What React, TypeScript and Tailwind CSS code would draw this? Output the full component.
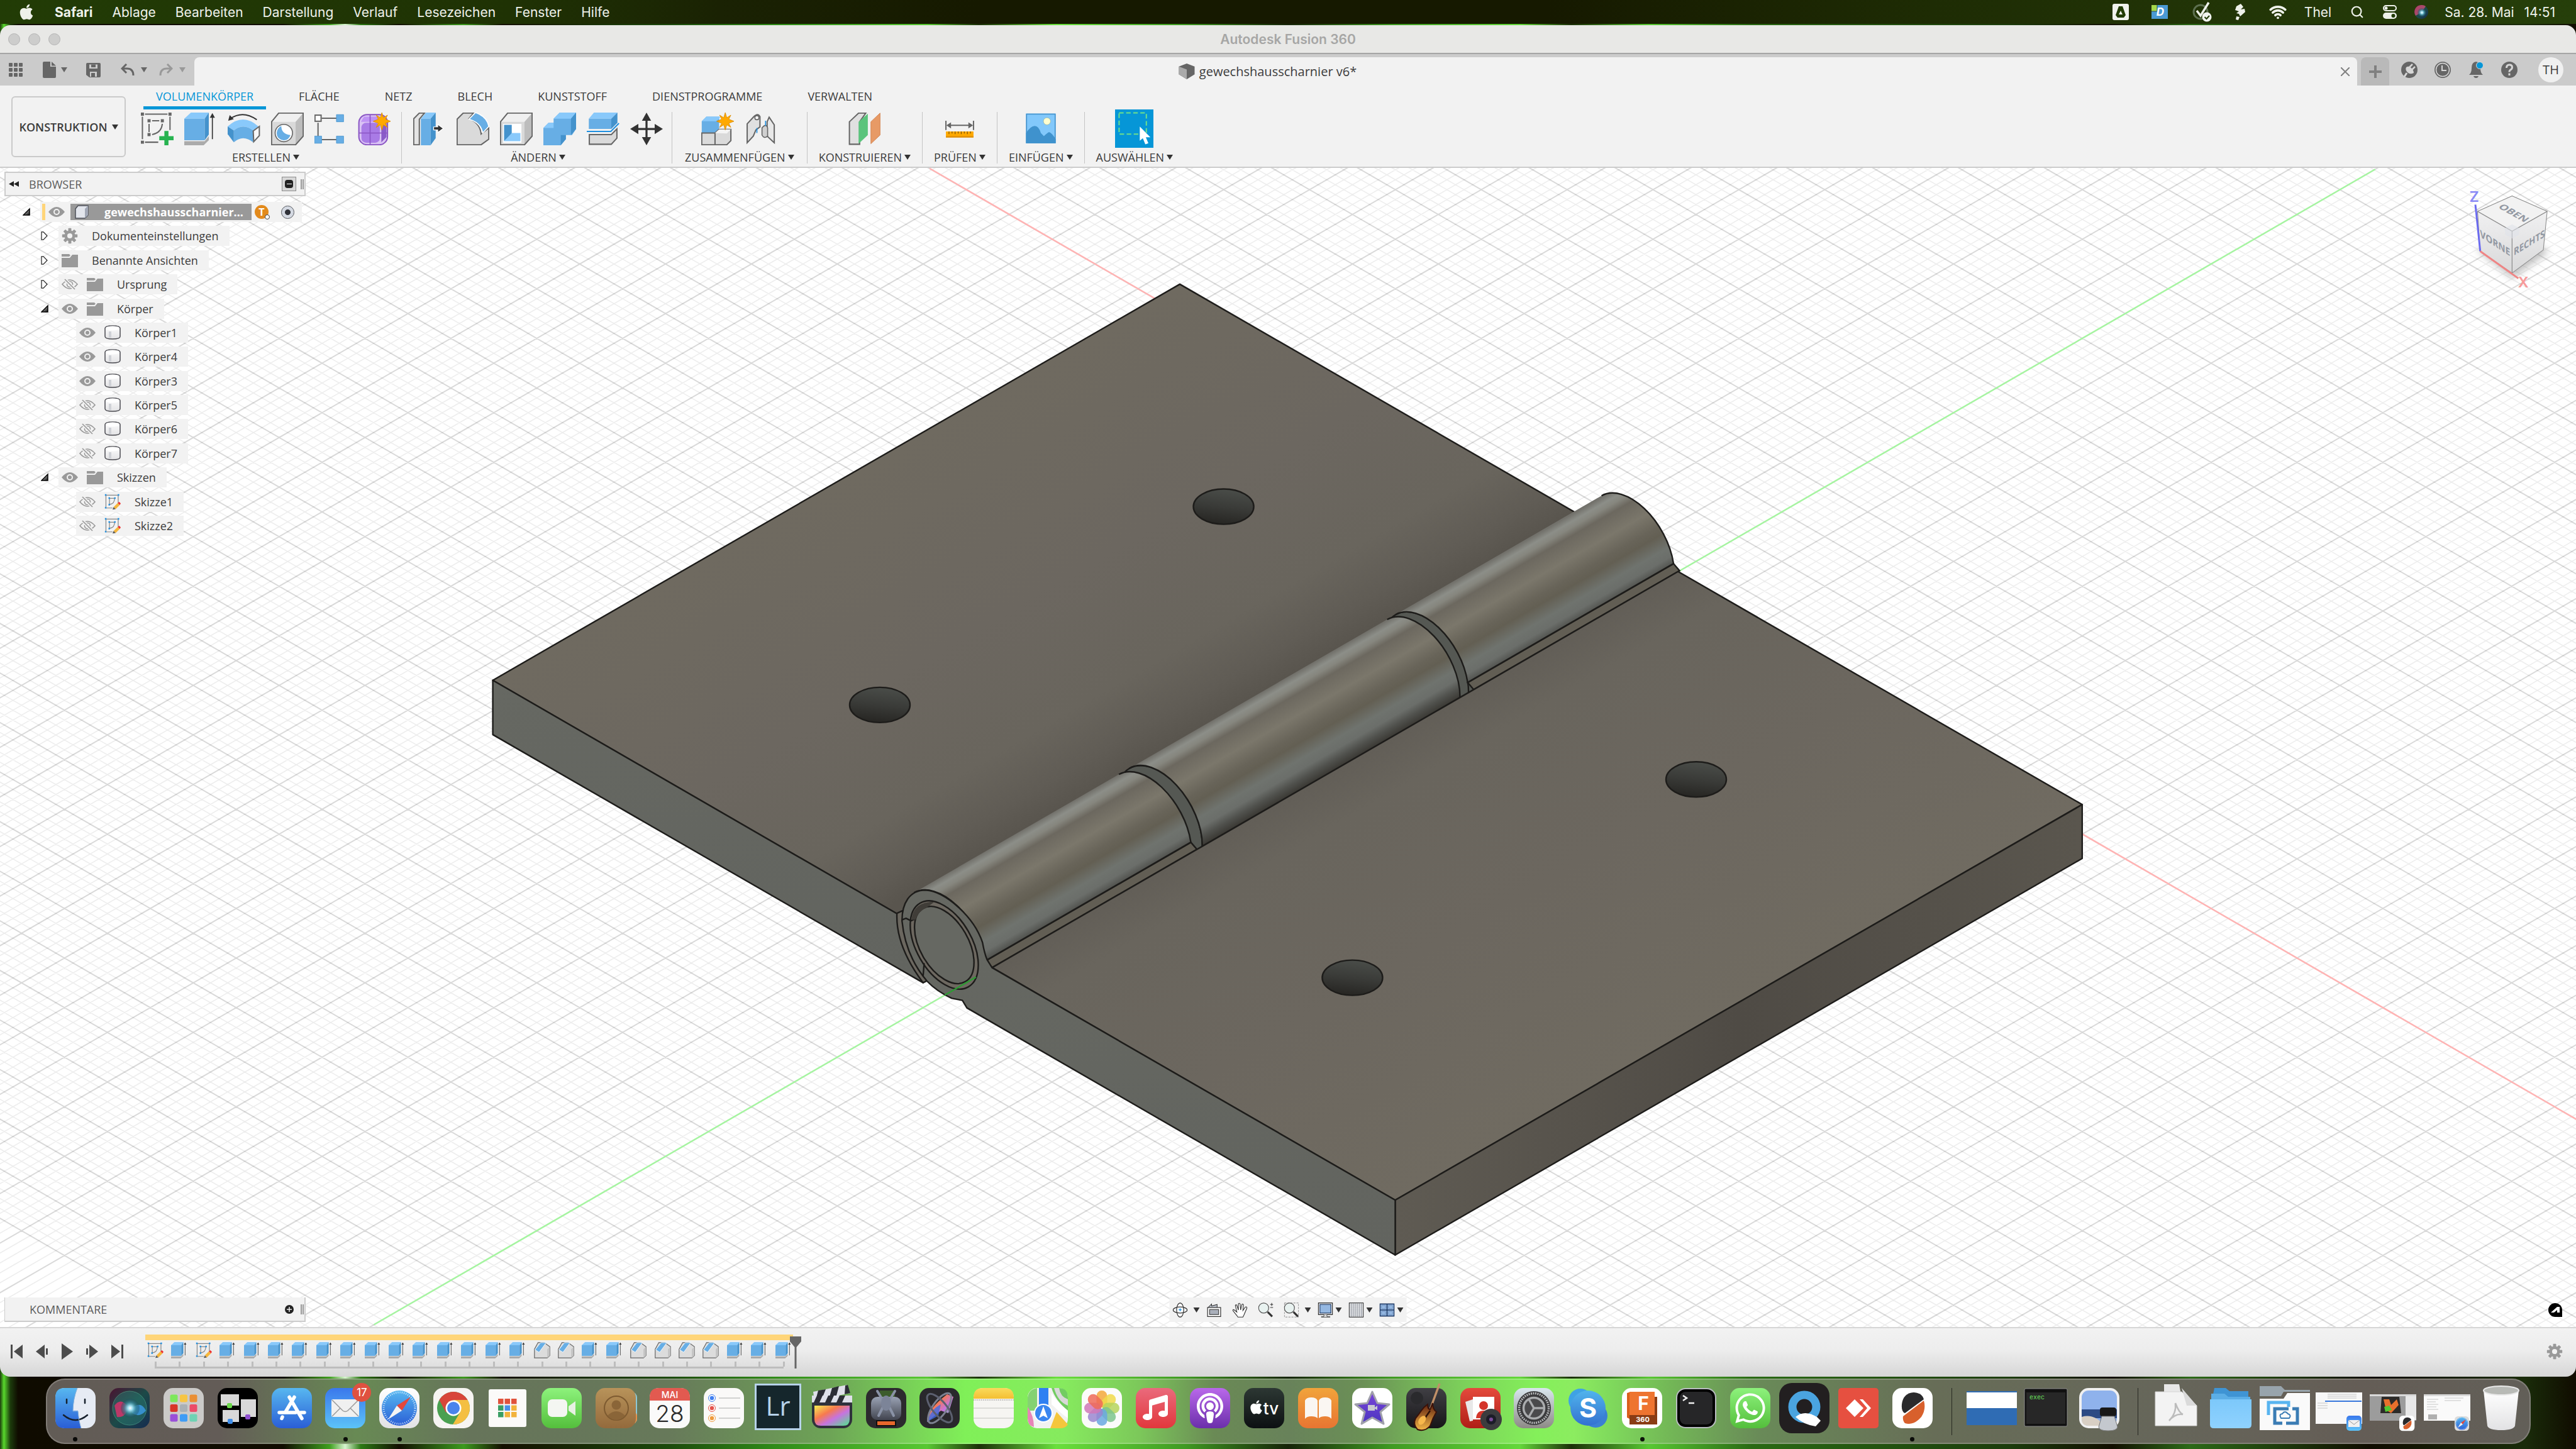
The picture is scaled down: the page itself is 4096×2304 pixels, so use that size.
import React from "react";
import { FaApple, FaWhatsapp, FaPodcast, FaMusic } from "react-icons/fa";
import { Wifi, Search } from "lucide-react";

type Kids = { children?: React.ReactNode };

/* ---------- shared gradients ---------- */

const verticalGradients: [string, string, string][] = [
  ["gBlue", "#57b7f0", "#2a5ed6"],
  ["gMail", "#3a78ec", "#5cc3f8"],
  ["gGreen", "#8df27c", "#54bf3c"],
  ["gRed", "#ea6a7c", "#e2373c"],
  ["gPurple", "#b968ea", "#6b2fab"],
  ["gBlack", "#2c3733", "#0c1012"],
  ["gOrange", "#f1a33b", "#e87532"],
  ["gGrey", "#d9e6ee", "#8d8a86"],
  ["gWhite", "#ffffff", "#e2e2e4"],
  ["gDark", "#403f44", "#161518"],
  ["gBooth", "#e44a3c", "#b01e16"],
  ["gSkype", "#50b4ec", "#3371d0"],
  ["gBrown", "#b8935a", "#946a3c"],
  ["gFolder", "#7cc8fa", "#8fd2ff"],
  ["gYellow", "#fada5c", "#f4bf33"],
  ["gMetal", "#9aa2b4", "#41444f"],
  ["gStar", "#7a45d8", "#4b35c0"],
  ["gGuitar", "#5c1c0c", "#f4b848"],
];

function SharedDefs() {
  return (
    <svg className="absolute h-0 w-0" aria-hidden="true">
      <defs>
        {verticalGradients.map(([id, a, b]) => (
          <linearGradient key={id} id={id} x1="0" y1="0" x2="0" y2="1">
            <stop offset="0" stopColor={a} />
            <stop offset="1" stopColor={b} />
          </linearGradient>
        ))}
        <linearGradient id="gRainbow" x1="0" y1="0" x2="1" y2="1">
          <stop offset="0" stopColor="#f6ef52" />
          <stop offset="0.35" stopColor="#f77a4e" />
          <stop offset="0.6" stopColor="#c673e0" />
          <stop offset="1" stopColor="#4ee88a" />
        </linearGradient>
        <radialGradient id="gSiri">
          <stop offset="0" stopColor="#ffffff" />
          <stop offset="0.25" stopColor="#9fe0f0" />
          <stop offset="0.6" stopColor="#3c8a9c" stopOpacity="0.8" />
          <stop offset="1" stopColor="#1c4a5c" stopOpacity="0.3" />
        </radialGradient>
        <linearGradient id="gSiriBg" x1="0" y1="0" x2="1" y2="1">
          <stop offset="0" stopColor="#4a1230" />
          <stop offset="0.5" stopColor="#1c4a48" />
          <stop offset="1" stopColor="#162c50" />
        </linearGradient>
        <linearGradient id="gFade" x1="0" y1="0" x2="1" y2="1">
          <stop offset="0" stopColor="#eeeeee" />
          <stop offset="1" stopColor="#111111" />
        </linearGradient>
      </defs>
    </svg>
  );
}

function Caret({ className = "text-[#333333]" }: { className?: string }) {
  return (
    <svg viewBox="0 0 10 8" className={`h-2 w-2.5 shrink-0 ${className}`} aria-hidden="true">
      <path d="M0 0H10L5 8Z" fill="currentColor" />
    </svg>
  );
}

/* ---------- macOS menu bar ---------- */

const menus = ["Ablage", "Bearbeiten", "Darstellung", "Verlauf", "Lesezeichen", "Fenster", "Hilfe"];

function MenuBar() {
  return (
    <header className="flex h-[38px] items-center justify-between bg-[linear-gradient(90deg,#223c06_0%,#1f3204_20%,#1a2203_28%,#161900_38%,#161900_60%,#1e2c04_75%,#263f0a_100%)] pr-[33px] pl-7 font-[Inter,sans-serif] text-[21px] leading-none text-[#eef1ea]">
      <nav className="flex items-center gap-[31px]">
        <button aria-label="Apple">
          <FaApple size={28} />
        </button>
        <button className="font-bold">Safari</button>
        {menus.map((m) => (
          <button key={m}>{m}</button>
        ))}
      </nav>
      <div className="flex items-center">
        <svg viewBox="0 0 26 26" className="mr-9 h-[26px] w-[26px]">
          <rect width="26" height="26" rx="3" fill="#f0f2ee" />
          <path d="M10 4h6l5 14-3 4H8l-3-4ZM13 11l-3 6h6Z" fill="#223c06" fillRule="evenodd" />
        </svg>
        <svg viewBox="0 0 26 22" className="mr-[38px] h-[22px] w-[26px]">
          <rect width="26" height="22" fill="#4a9ad4" />
          <rect width="9" height="10" fill="#a5d84a" />
          <path d="M9 0v10H0" fill="none" stroke="#274a5a" />
          <text x="14" y="17" fontSize="17" fontWeight="700" fontStyle="italic" textAnchor="middle" fill="#fff">D</text>
        </svg>
        <svg viewBox="0 0 32 32" className="mr-9 h-8 w-8">
          <circle cx="14" cy="16" r="11" fill="none" stroke="#5d7050" strokeWidth="3" />
          <path d="M8 14l6 8L27 1" fill="none" stroke="#eef1ea" strokeWidth="3.500" />
          <circle cx="24" cy="24" r="7.500" fill="#f2f4f0" />
          <path d="M20.500 24l3 3 4.500-5" fill="none" stroke="#223c06" strokeWidth="2" />
        </svg>
        <svg viewBox="0 0 17 26" className="mr-[38px] h-[26px] w-[17px]" fill="#eef1ea">
          <path d="M10 0l4 5-4 4 6-1 1 5-8 7-2-4-4-1 4-3-6-2 2-6Z" />
          <path d="M3 20l5 1-2 5-4-1Z" />
        </svg>
        <Wifi size={28} strokeWidth={3.2} className="mr-7" />
        <span className="mr-[30px]">Thel</span>
        <Search size={22} strokeWidth={2.4} className="mr-[30px]" />
        <svg viewBox="0 0 22 22" className="mr-7 h-[22px] w-[22px]">
          <rect x="1" y="1" width="20" height="8" rx="4" fill="none" stroke="#eef1ea" strokeWidth="2" />
          <circle cx="5" cy="5" r="2.500" fill="#eef1ea" />
          <rect x="0" y="12" width="22" height="10" rx="5" fill="#eef1ea" />
          <circle cx="16.500" cy="17" r="3" fill="#223c06" />
        </svg>
        <svg viewBox="0 0 22 22" className="mr-[26px] h-[22px] w-[22px]">
          <circle cx="11" cy="11" r="11" fill="url(#gSiriBg)" />
          <path d="M11 0a11 11 0 0 0-9 17q6-3 9-6 4-4 7-9a11 11 0 0 0-7-2" fill="#e0507c" opacity="0.7" />
          <circle cx="12" cy="12" r="7" fill="url(#gSiri)" />
        </svg>
        <span className="mr-4">Sa. 28. Mai</span>
        <span>14:51</span>
      </div>
    </header>
  );
}

/* ---------- window chrome ---------- */

function TitleBar() {
  return (
    <div className="flex h-[46px] items-center border-b-2 border-[#a5a5a5] bg-[#e8e8e6] px-[13px]">
      <div className="flex flex-1 gap-[13px]">
        {["Schließen", "Minimieren", "Zoomen"].map((l) => (
          <button key={l} aria-label={l} className="h-[19px] w-[19px] rounded-full border border-[#b4b4b4] bg-[#cdcdcc]" />
        ))}
      </div>
      <h1 className="font-[Inter,sans-serif] text-[21px] leading-none font-semibold text-[#a6a6a5]">Autodesk Fusion 360</h1>
      <div className="flex-1" />
    </div>
  );
}

function TabBar() {
  return (
    <div className="flex h-[50px] bg-[#cbcbcb]">
      <div className="flex w-[309px] shrink-0 items-center pl-[14px] text-[#666666]">
        <button aria-label="Daten" className="mr-8">
          <svg viewBox="0 0 22 22" className="h-[22px] w-[22px]" fill="currentColor">
            {[0, 8, 16].map((y) => [0, 8, 16].map((x) => <rect key={`${x}-${y}`} x={x} y={y} width="6" height="6" rx="1" />))}
          </svg>
        </button>
        <button aria-label="Datei" className="mr-[30px] flex items-center gap-2">
          <svg viewBox="0 0 21 26" className="h-[26px] w-[21px]" fill="currentColor">
            <path d="M2 0H12V8H21V24q0 2-2 2H2q-2 0-2-2V2q0-2 2-2ZM14 0L21 6.500H14Z" />
          </svg>
          <Caret className="text-[#666666]" />
        </button>
        <button aria-label="Speichern" className="mr-8">
          <svg viewBox="0 0 23 23" className="h-[23px] w-[23px]">
            <path d="M2 0H21q2 0 2 2V21q0 2-2 2H5L0 19V2q0-2 2-2Z" fill="#666666" />
            <path d="M5 2.500H18V9H5ZM6 14H17V22H6Z" fill="#cbcbcb" />
            <path d="M8 2.500H15V7H8ZM8 16h6v6H8Z" fill="#666666" />
          </svg>
        </button>
        <button aria-label="Rückgängig" className="mr-[19px] flex items-center gap-2.5">
          <svg viewBox="0 0 22 20" className="h-5 w-[22px]" fill="none" stroke="currentColor" strokeWidth="3">
            <path d="M9 1L2 8l7 7M2 8h8q10 0 10 11" />
          </svg>
          <Caret className="text-[#666666]" />
        </button>
        <button aria-label="Wiederholen" className="flex items-center gap-2.5 text-[#999999]">
          <svg viewBox="0 0 22 20" className="h-5 w-[22px]" fill="none" stroke="currentColor" strokeWidth="3">
            <path d="M13 1l7 7-7 7M20 8h-8Q2 8 2 19" />
          </svg>
          <Caret className="text-[#999999]" />
        </button>
      </div>
      <div className="mt-[5px] mr-[6px] flex flex-1 items-center rounded-t-lg bg-[#f2f2f2] pr-[12px]">
        <div className="flex flex-1 items-center justify-center gap-[7px]">
          <svg viewBox="0 0 26 26" className="h-[25px] w-[26px]">
            <path d="M0 5L13 0l13 5v13l-13 8L0 18Z" fill="#666666" />
            <path d="M0 5l13 5v16L0 18Z" fill="#aaaaaa" />
          </svg>
          <span className="text-[20px] leading-none text-[#3c3c3c]">gewechshausscharnier v6*</span>
        </div>
        <button aria-label="Tab schließen">
          <svg viewBox="0 0 14 14" className="h-3.5 w-3.5" stroke="#808080" strokeWidth="2">
            <path d="M0 0L14 14M14 0L0 14" />
          </svg>
        </button>
      </div>
      <button aria-label="Neuer Tab" className="mt-[5px] flex w-[45px] items-center justify-center rounded-t-lg bg-[#b9b9b9]">
        <svg viewBox="0 0 20 20" className="h-5 w-5" stroke="#808080" strokeWidth="4">
          <path d="M10 0V20M0 10H20" />
        </svg>
      </button>
      <div className="flex items-center gap-[27px] pr-5 pl-[19px]">
        <button aria-label="Erweiterungen">
          <svg viewBox="0 0 26 26" className="h-[26px] w-[26px]">
            <circle cx="13" cy="13" r="13" fill="#666666" />
            <path d="M5 24L9 18" stroke="#d6d6d6" strokeWidth="3" />
            <path d="M8 9q4-3 8 1t4 8q-6 3-10-1t-2-8" fill="#d6d6d6" />
            <path d="M13 9l5-5M17 13l5-5" stroke="#d6d6d6" strokeWidth="2.500" />
          </svg>
        </button>
        <button aria-label="Auftragsstatus">
          <svg viewBox="0 0 26 26" className="h-[26px] w-[26px]">
            <circle cx="13" cy="13" r="12" fill="#666666" stroke="#666666" strokeWidth="2" />
            <circle cx="13" cy="13" r="10.500" fill="none" stroke="#d6d6d6" strokeWidth="1.500" />
            <path d="M12 6V14H19" fill="none" stroke="#d6d6d6" strokeWidth="2" />
          </svg>
        </button>
        <button aria-label="Benachrichtigungen">
          <svg viewBox="0 0 26 28" className="h-7 w-[26px]">
            <path d="M13 1q7 1 7 10 0 8 4 11H2q4-3 4-11 0-9 7-10Z" fill="#666666" />
            <path d="M9 24h8q-1 3-4 3t-4-3" fill="#666666" />
            <circle cx="19" cy="7" r="5.500" fill="#0696d7" stroke="#d6d6d6" />
          </svg>
        </button>
        <button aria-label="Hilfe">
          <svg viewBox="0 0 26 26" className="h-[26px] w-[26px]">
            <circle cx="13" cy="13" r="13" fill="#666666" />
            <path d="M8.500 10q0-5 4.500-5t4.500 4q0 2.500-2.500 4-2 1-2 3.500" fill="none" stroke="#d6d6d6" strokeWidth="3" />
            <rect x="11.500" y="18.500" width="3" height="3.500" fill="#d6d6d6" />
          </svg>
        </button>
        <button className="ml-1.5 h-10 w-10 rounded-full bg-[#f0f0f0] text-[20px] leading-none text-[#3c3c3c]">TH</button>
      </div>
    </div>
  );
}

/* ---------- tool icons, drawn in a 64 unit square ---------- */

function Ico({ children }: Kids) {
  return (
    <svg viewBox="0 0 64 64" className="h-[52px] w-[52px] shrink-0" aria-hidden="true">
      {children}
    </svg>
  );
}

const B1 = "#89c9fb";
const B2 = "#67aee5";
const B3 = "#4492cc";
const G = "#666666";

const Extrude = () => (
  <>
    <path d="M0 12L13 0H48L40 12Z" fill={B1} />
    <path d="M0 12H40V54H0Z" fill={B2} />
    <path d="M40 12L48 0V43L40 54Z" fill={B3} />
    <path d="M0 56H40L48 46V54L38 64H0Z" fill="#ababab" />
    <path d="M55 6V52" stroke="#333" strokeWidth="2" />
    <path d="M55 1L50 10H60Z" fill="#333" />
  </>
);

const SketchPlus = () => (
  <>
    <path d="M8 3H52M3 8V52M57 8V34M8 58H34M22 16H36M16 22V38M22 43Q40 40 42 22" fill="none" stroke={G} strokeWidth="2.500" />
    <path d="M0 0h6v6H0ZM54 0h6v6h-6ZM0 55h6v6H0ZM13 13h6v6h-6ZM39 13h6v6h-6ZM13 40h6v6h-6Z" fill={G} />
    <path d="M46 36h8v10h10v8H54v10h-8V54H36v-8h10Z" fill="#27b350" />
  </>
);

const Revolve = () => (
  <>
    <path d="M0 27Q30 0 60 27L50 35Q30 20 12 35Z" fill={B1} />
    <path d="M12 35Q30 20 50 35V58Q30 42 12 58Z" fill={B2} />
    <path d="M0 27L12 35V58L0 42Z" fill={B3} />
    <path d="M50 36L62 27V45L51 57Z" fill="#f8f8f8" stroke={G} strokeWidth="2.500" />
    <path d="M5 12Q30-5 57 14" fill="none" stroke="#333" strokeWidth="2.500" />
    <path d="M1 16L4 5l8 8Z" fill="#333" />
  </>
);

const BoxShape = () => (
  <>
    <path d="M1 18L15 1H63L48 18Z" fill="#f0f0f0" />
    <path d="M48 18L63 1V46L48 63Z" fill="#bdbdbd" />
    <path d="M1 18H48V63H1Z" fill="#d9d9d9" />
    <path d="M1 18L15 1H63V46L48 63H1Z" fill="none" stroke={G} strokeWidth="2.500" />
  </>
);

const Hole = () => (
  <>
    <BoxShape />
    <circle cx="25" cy="40" r="17" fill="#fff" stroke={G} strokeWidth="2" />
    <path d="M20 26Q20 42 38 44Q34 55 24 54Q11 52 11 40Q12 30 20 26Z" fill={B2} />
  </>
);

const PatternIcon = () => (
  <>
    <path d="M14 11H46M7 20V46M14 53H46" stroke={G} strokeWidth="2.500" />
    <rect x="1" y="5" width="12" height="12" fill="#fff" stroke={G} strokeWidth="2.500" />
    <path d="M43 4h14v14H43ZM0 46h14v14H0ZM43 46h14v14H43Z" fill={B2} stroke={B3} />
  </>
);

const Burst = ({ x, y }: { x: number; y: number }) => (
  <path
    transform={`translate(${x} ${y})`}
    d="M0-17L3-7 11-12 7-4 17 0 7 4 11 12 3 7 0 17-3 7-11 12-7 4-17 0-7-4-11-12-3-7Z"
    fill="#ffa900"
    stroke="#d98a00"
  />
);

const Form = () => (
  <>
    <rect x="2" y="4" width="56" height="59" rx="16" fill="#d9c2f4" stroke="#8a55c4" strokeWidth="2.500" />
    <rect x="7" y="20" width="36" height="39" rx="9" fill="#a97be6" />
    <path d="M12 8H38L44 18H6Z" fill="#bf93f5" />
    <path d="M46 24L56 16V48L46 58Z" fill="#8a5cc9" />
    <path d="M24 5V62M2 40H58" stroke="#8a55c4" strokeWidth="2" />
    <Burst x={47} y={17} />
  </>
);

const PushPull = () => (
  <>
    <path d="M1 12L12 1H22L12 13V63H1Z" fill="#e4e4e4" stroke={G} strokeWidth="2.500" />
    <path d="M15 12L25 0H44L34 12Z" fill={B1} />
    <path d="M15 12H34V64H15Z" fill={B2} />
    <path d="M34 12L44 0V50L34 64Z" fill={B3} />
    <path d="M40 28h8v-5l11 8-11 8v-5h-8Z" fill="#333" stroke="#fff" strokeWidth="1.500" />
  </>
);

const Fillet = () => (
  <>
    <path d="M1 13L13 1H33L24 12Q46 20 48 42L63 30V52L48 63H1Z" fill="#dadada" stroke={G} strokeWidth="2.500" />
    <path d="M37 0Q60 8 63 27L51 40Q48 20 24 13Z" fill={B2} stroke="#fff" strokeWidth="2" />
  </>
);

const Shell = () => (
  <>
    <BoxShape />
    <path d="M6 22H42V59H6Z" fill="#fff" />
    <path d="M8 24H23V42L8 56Z" fill={B3} />
    <path d="M23 40H40V56H8Z" fill={B1} />
  </>
);

const Combine = () => (
  <>
    <path d="M20 12L32 0H64V32L56 44H44V52L34 64H0V30L10 20H20Z" fill={B2} />
    <path d="M20 12L32 0H64L54 12ZM0 30L10 20H20V30Z" fill={B1} />
    <path d="M54 12L64 0V32L54 44ZM34 44H44V52L34 64Z" fill={B3} />
  </>
);

const Split = () => (
  <>
    <path d="M4 12L14 0H60L48 12Z" fill={B1} />
    <path d="M4 12H48V32H4Z" fill={B2} />
    <path d="M48 12L60 0V20L48 32Z" fill={B3} />
    <path d="M0 37H47L63 21" fill="none" stroke="#1e8fe0" strokeWidth="2.500" />
    <path d="M5 43H48L59 32V50L48 62H5Z" fill="#dadada" stroke={G} strokeWidth="2.500" />
  </>
);

const Move = () => (
  <path
    d="M32 0L41 16H34V30H48V22L64 32 48 42V34H34V48H41L32 64 23 48H30V34H16V42L0 32 16 22V30H30V16H23Z"
    fill="#333"
  />
);

const NewComp = () => (
  <>
    <path d="M1 17L10 8H35V40H1Z" fill={B2} />
    <path d="M1 17L10 8H38L30 17Z" fill={B1} />
    <path d="M1 40H27V63H1ZM27 40L35 33H58V55L50 63H27Z" fill="#dadada" stroke={G} strokeWidth="2.500" />
    <path d="M27 40L35 33H58L50 41Z" fill="#f4f4f4" />
    <Burst x={47} y={17} />
  </>
);

const Joint = () => (
  <>
    <path d="M5 22L18 8Q26 0 30 8V28L22 34 17 46 5 59Z" fill="#e0e0e0" stroke={G} strokeWidth="2.500" />
    <path d="M58 59L44 46V18L48 9 58 24Z" fill="#e8e8e8" stroke={G} strokeWidth="2.500" />
    <path d="M34 30Q42 20 45 30V46Q38 52 34 44Z" fill="#d0d0d0" stroke={G} strokeWidth="2" />
    <circle cx="24" cy="10" r="4" fill="#fff" stroke={G} strokeWidth="2" />
    <path d="M24 30V40M41 16V26" stroke="#1e8fe0" strokeWidth="2" />
  </>
);

const Planes = () => (
  <>
    <path d="M2 18L20 1H34L22 18V62H2Z" fill="#e0e0e0" stroke={G} strokeWidth="2.500" />
    <path d="M20 18L38 2V44L20 61Z" fill="#5ac47c" />
    <path d="M44 18L62 1V44L44 61Z" fill="#e79a66" stroke="#cf7a44" />
  </>
);

const Measure = () => (
  <>
    <path d="M5 16V34M59 16V34M8 25H56" stroke={G} strokeWidth="2.500" />
    <path d="M6 25l9-6v12ZM58 25l-9-6v12Z" fill={G} />
    <rect x="5" y="37" width="54" height="11" fill="#ffa900" />
    <path d="M11 37v5M17 37v4M23 37v5M29 37v4M35 37v5M41 37v4M47 37v5M53 37v4" stroke="#7a5200" strokeWidth="1.500" />
    <rect x="5" y="46" width="54" height="3" fill="#e08f00" />
  </>
);

const Picture = () => (
  <>
    <rect x="3" y="2" width="58" height="58" fill="#82c8fb" />
    <rect x="4" y="3" width="56" height="56" fill="none" stroke={B3} strokeWidth="2" />
    <circle cx="44" cy="17" r="7" fill="#ffffd0" stroke="#9bb8a8" />
    <path d="M3 60V40Q12 26 20 26 28 26 32 40L38 46Q44 40 48 38 54 40 61 52V60Z" fill="#3f92cd" />
  </>
);

const Select = () => (
  <svg viewBox="0 0 76 76" className="h-[61px] w-[61px] shrink-0" aria-hidden="true">
    <rect width="76" height="76" fill="#0696d7" />
    <rect x="8" y="7" width="54" height="42" fill="none" stroke="#6fe08a" strokeWidth="2.500" strokeDasharray="9 5" />
    <path d="M49 34L70 55H61L66 67 60 69 55 57 49 62Z" fill="#fff" />
  </svg>
);

const groups: { label: string; icons: React.FC[]; cls: string }[] = [
  { label: "ERSTELLEN", icons: [SketchPlus, Extrude, Revolve, Hole, PatternIcon, Form], cls: "pr-[17px]" },
  { label: "ÄNDERN", icons: [PushPull, Fillet, Shell, Combine, Split, Move], cls: "pl-[18px] pr-[14px]" },
  { label: "ZUSAMMENFÜGEN", icons: [NewComp, Joint], cls: "px-5" },
  { label: "KONSTRUIEREN", icons: [Planes], cls: "px-[18px]" },
  { label: "PRÜFEN", icons: [Measure], cls: "px-[18px]" },
  { label: "EINFÜGEN", icons: [Picture], cls: "px-[18px]" },
];

const tabs = ["VOLUMENKÖRPER", "FLÄCHE", "NETZ", "BLECH", "KUNSTSTOFF", "DIENSTPROGRAMME", "VERWALTEN"];

function Toolbar() {
  return (
    <div className="flex h-[131px] border-b-2 border-[#cccccc] bg-[#f2f2f2] pl-[18px] text-[18px] leading-none text-[#3c3c3c]">
      <button className="mt-[17px] flex h-[97px] w-[182px] shrink-0 items-center justify-center gap-[7px] rounded-md border-2 border-[#cacaca] font-semibold">
        KONSTRUKTION
        <Caret />
      </button>
      <div className="ml-6">
        <nav className="ml-1 flex gap-8">
          {tabs.map((t, i) => (
            <button
              key={t}
              className={
                i === 0
                  ? "h-[38px] border-b-[5px] border-[#0696d7] px-5 text-[#0696d7]"
                  : "h-[38px] border-b-[5px] border-transparent px-5"
              }
            >
              {t}
            </button>
          ))}
        </nav>
        <div className="flex">
          {groups.map((g) => (
            <React.Fragment key={g.label}>
              <div className={`flex flex-col items-center ${g.cls}`}>
                <div className="flex h-[61px] items-center gap-[17px]">
                  {g.icons.map((C, i) => (
                    <button key={i} aria-label={`${g.label} ${i + 1}`}>
                      <Ico>
                        <C />
                      </Ico>
                    </button>
                  ))}
                </div>
                <button className="mt-[5px] flex h-5 items-center gap-1">
                  {g.label}
                  <Caret />
                </button>
              </div>
              <div className="mt-1 h-[82px] w-px bg-[#c4c4c4]" />
            </React.Fragment>
          ))}
          <div className="flex flex-col items-center px-[18px]">
            <button aria-label="Auswahl">
              <Select />
            </button>
            <button className="mt-[5px] flex h-5 items-center gap-1">
              AUSWÄHLEN
              <Caret />
            </button>
          </div>
        </div>
      </div>
    </div>
  );
}

/* ---------- 3D scene ---------- */

const SLOPE = 0.57735;
const CELL = 98.5;

function gridPath(major: boolean) {
  let d = "";
  for (let k = -160; k <= 160; k++) {
    if ((k % 5 === 0) !== major) continue;
    const up = 3061.9 + (k * CELL) / 5;
    const down = -731.5 + (k * CELL) / 5;
    d += `M0 ${up.toFixed(1)}L5120 ${(up - SLOPE * 5120).toFixed(1)}`;
    d += `M0 ${down.toFixed(1)}L5120 ${(down + SLOPE * 5120).toFixed(1)}`;
  }
  return d;
}

const EDGE = "#1d1c1a";

/* One hinge knuckle, swept from offset s to offset e along the hinge axis. */
function Knuckle({ s, e, long }: { s: number; e: number; long?: boolean }) {
  const at = (x: number, y: number, t: number) => `${x + t} ${(y - t * SLOPE).toFixed(1)}`;
  const [rx, ry] = long ? [1961.7, 1929.3] : [1960, 1909];
  return (
    <>
      {s > 0 && (
        <ellipse cx={1877 + s} cy={1878 - s * SLOPE} rx="120" ry="69" transform={`rotate(60 ${1877 + s} ${1878 - s * SLOPE})`} fill="#555853" stroke={EDGE} strokeWidth="3" />
      )}
      <path
        d={`M${at(1817, 1774, s)}A120 69 60 0 1 ${at(rx, ry, s)}L${at(rx, ry, e)}A120 69 60 0 0 ${at(1817, 1774, e)}Z`}
        fill="url(#cyl)"
      />
      {!long && (
        <path d={`M${at(1960, 1909, s)}L${at(1972, 1923, s)}L${at(1972, 1923, e)}L${at(1960, 1909, e)}Z`} fill="#625e54" stroke={EDGE} strokeWidth="3" />
      )}
      <path
        d={`M${at(1817, 1774, s)}A120 69 60 0 1 ${at(rx, ry, s)}L${at(rx, ry, e)}A120 69 60 0 0 ${at(1817, 1774, e)}`}
        fill="none"
        stroke={EDGE}
        strokeWidth="3"
      />
    </>
  );
}

const holes = [
  [2432, 1007],
  [1749, 1401],
  [3371, 1549],
  [2688, 1943],
];

function Scene() {
  return (
    <svg
      viewBox="0 334 5120 2303"
      preserveAspectRatio="xMidYMid slice"
      className="absolute inset-0 h-full w-full"
      role="img"
      aria-label="gewechshausscharnier"
    >
      <defs>
        <linearGradient id="cyl" gradientUnits="userSpaceOnUse" x1="1817" y1="1774" x2="1920" y2="1953">
          <stop offset="0" stopColor="#72716b" />
          <stop offset="0.06" stopColor="#8c8e88" />
          <stop offset="0.11" stopColor="#86867e" />
          <stop offset="0.18" stopColor="#6c685f" />
          <stop offset="0.36" stopColor="#7b776b" />
          <stop offset="0.52" stopColor="#686459" />
          <stop offset="0.6" stopColor="#635f53" />
          <stop offset="0.74" stopColor="#6f736e" />
          <stop offset="0.83" stopColor="#6b6e6a" />
          <stop offset="0.91" stopColor="#50514d" />
          <stop offset="1" stopColor="#383631" />
        </linearGradient>
        <linearGradient id="topL" gradientUnits="userSpaceOnUse" x1="2740" y1="1240" x2="2349" y2="562">
          <stop offset="0" stopColor="#59554e" />
          <stop offset="0.07" stopColor="#605c55" />
          <stop offset="0.2" stopColor="#69655d" />
          <stop offset="0.5" stopColor="#6c6760" />
          <stop offset="1" stopColor="#6f6a60" />
        </linearGradient>
        <linearGradient id="topR" gradientUnits="userSpaceOnUse" x1="2653" y1="1530" x2="3053" y2="2223">
          <stop offset="0" stopColor="#625e57" />
          <stop offset="0.12" stopColor="#69655d" />
          <stop offset="0.5" stopColor="#6c675f" />
          <stop offset="1" stopColor="#706b61" />
        </linearGradient>
        <linearGradient id="sideR" x1="0" y1="0" x2="1" y2="0">
          <stop offset="0" stopColor="#5f5b53" />
          <stop offset="0.5" stopColor="#4f4b45" />
          <stop offset="1" stopColor="#5a564e" />
        </linearGradient>
        <linearGradient id="faceL" x1="0" y1="0" x2="0" y2="1">
          <stop offset="0" stopColor="#666862" />
          <stop offset="1" stopColor="#62645f" />
        </linearGradient>
        <linearGradient id="hole" x1="0.6" y1="0" x2="0.4" y2="1">
          <stop offset="0" stopColor="#4a4d49" />
          <stop offset="0.5" stopColor="#3a3b38" />
          <stop offset="1" stopColor="#262522" />
        </linearGradient>
      </defs>
      <rect y="334" width="5120" height="2303" fill="#ffffff" />
      <path d={gridPath(false)} stroke="#000000" strokeOpacity="0.07" strokeWidth="2" />
      <path d={gridPath(true)} stroke="#000000" strokeOpacity="0.15" strokeWidth="2.500" />
      <path d="M1848 335L5120 2224.500" stroke="#ffb3b3" strokeWidth="3" />
      <path d="M744 2632.400L4720 336.800" stroke="#a5f5a0" strokeWidth="3" />

      <g stroke={EDGE} strokeWidth="3" strokeLinejoin="round">
        <path d="M2345 565L3180 1047L1860 1860L1785 1817L980 1352Z" fill="url(#topL)" />
        <path d="M980 1352L1785 1817Q1786 1880 1835 1953L980 1460Z" fill="url(#faceL)" />
      </g>

      <path d="M1950 1900L1972 1923L3335 1136L3313 1113Z" fill="#555853" />
      <Knuckle s={957} e={1366} />
      <Knuckle s={428} e={940} long />
      <Knuckle s={0} e={407} />

      <g stroke={EDGE} strokeWidth="3" strokeLinejoin="round">
        <path d="M1972 1923L3335 1136L4138 1599L2773 2385Z" fill="url(#topR)" />
        <path d="M2773 2385L4138 1599V1706L2773 2494Z" fill="url(#sideR)" />
        <path d="M1783 1815Q1780 1880 1835 1953L1843 1949Q1796 1890 1794 1810Z" fill="#6b675f" />
        <path
          d="M1793 1830C1793 1795 1808 1769 1840 1769C1880 1772 1936 1822 1953 1873Q1957 1895 1962 1907L1972 1923L2773 2385V2494L1922 2003L1913 1988L1892 1984Q1862 1970 1843 1950Q1800 1900 1793 1830Z"
          fill="url(#faceL)"
        />
        <ellipse cx="1877" cy="1878" rx="96" ry="55" transform="rotate(60 1877 1878)" fill="#6d6860" />
        <ellipse cx="1877" cy="1878" rx="84" ry="48" transform="rotate(60 1877 1878)" fill="#666862" />
        <path d="M1793 1828L1801 1825L1811 1830L1820 1826M1837 1914L1835 1940" fill="none" />
      </g>
      <path d="M1812 1828Q1815 1792 1858 1792L1843 1803Q1824 1812 1820 1828Z" fill="#403d38" />
      <path d="M1878 1977.600L1940 1941.800" stroke="#2f9a34" strokeWidth="3" />

      {holes.map(([x, y]) => (
        <ellipse key={x} cx={x} cy={y} rx="60" ry="35" fill="url(#hole)" stroke={EDGE} strokeWidth="3" />
      ))}
    </svg>
  );
}

function ViewCube() {
  return (
    <svg viewBox="0 0 780 780" className="absolute top-[5px] right-0 h-52 w-52" aria-label="ViewCube">
      <defs>
        <filter id="soft" x="-30%" y="-30%" width="160%" height="160%">
          <feGaussianBlur stdDeviation="22" />
        </filter>
        <linearGradient id="cubeSide" x1="0" y1="0" x2="0" y2="1">
          <stop offset="0" stopColor="#f0f0f1" />
          <stop offset="1" stopColor="#d9d9da" />
        </linearGradient>
      </defs>
      <path d="M190 470L400 360L620 480L400 640Z" fill="#9a9a9a" opacity="0.6" filter="url(#soft)" />
      <g stroke="#8c8c8c" strokeWidth="4" strokeLinejoin="round">
        <path d="M193 240L399 358V608L208 478Z" fill="url(#cubeSide)" />
        <path d="M608 240L399 358V608L585 470Z" fill="url(#cubeSide)" />
        <path d="M399 148L193 240L399 358L608 240Z" fill="#f2f2f2" />
      </g>
      <path d="M355 340L399 318L443 340L440 380L399 402L358 380Z" fill="#dfe3ea" opacity="0.6" />
      <path d="M180 200L209 478" stroke="#6a6af0" strokeWidth="11" />
      <path d="M209 478L436 640" stroke="#f08484" strokeWidth="11" />
      <g fontFamily="Open Sans, sans-serif" fontWeight="700" fill="#9298a2">
        <text transform="matrix(0.86 0.48 -0.7 0.5 393 262)" textAnchor="middle" fontSize="66">OBEN</text>
        <text transform="matrix(0.86 0.56 0.03 1 298 450)" textAnchor="middle" fontSize="60">VORNE</text>
        <text transform="matrix(0.82 -0.5 0 1 501 448)" textAnchor="middle" fontSize="60">RECHTS</text>
      </g>
      <g fontFamily="Inter, sans-serif" fontWeight="600" fontSize="88" textAnchor="middle">
        <text x="173" y="185" fill="#8a8af5">Z</text>
        <text x="466" y="694" fill="#f79a9a">X</text>
      </g>
    </svg>
  );
}

/* ---------- browser tree ---------- */

function Eye({ on }: { on: boolean }) {
  return (
    <svg viewBox="0 0 26 18" className="h-[18px] w-[26px] shrink-0" aria-hidden="true">
      {on ? (
        <>
          <path d="M0 9Q13-7 26 9Q13 25 0 9Z" fill="#999999" />
          <circle cx="13" cy="9" r="4" fill="#999999" stroke="#f2f2f2" strokeWidth="2" />
        </>
      ) : (
        <g fill="none" stroke="#999999" strokeWidth="1.700">
          <path d="M1 9Q13-5 25 9Q13 23 1 9Z" />
          <circle cx="13" cy="9" r="4.500" />
          <path d="M5 1L21 17" stroke="#f2f2f2" strokeWidth="5" />
          <path d="M5 1L21 17" />
        </g>
      )}
    </svg>
  );
}

const Folder = () => (
  <svg viewBox="0 0 26 22" className="h-[22px] w-[26px] shrink-0" aria-hidden="true">
    <path d="M0 1H12L14 3 12 5H0ZM0 7H13L17 2H26V22H0Z" fill="#999999" />
  </svg>
);

const Body = () => (
  <svg viewBox="0 0 26 24" className="h-6 w-[26px] shrink-0" aria-hidden="true">
    <path d="M1 5V18Q1 22 13 22T25 18V5Q25 1 13 1T1 5Z" fill="url(#gWhite)" stroke="#4a4a50" strokeWidth="1.500" />
    <ellipse cx="13" cy="5" rx="11" ry="3.500" fill="#fff" />
    <path d="M7 10H11V20H7Z" fill="#cfd1d6" />
  </svg>
);

const SketchArt = () => (
  <>
    <path d="M3 3H27V18M3 3V28H16M10 9H20M10 9V21Q20 20 20 9" fill="none" stroke="#888" strokeWidth="1.500" />
    <path d="M1 1h3v3H1ZM26 1h3v3h-3ZM1 26h3v3H1ZM8 7h3v3H8ZM19 7h3v3h-3ZM8 20h3v3H8Z" fill="#1e8fe0" />
    <path d="M18 26L26 18 30 22 22 30Z" fill="#f5b63c" />
    <path d="M26 18L29 16 32 19 30 22Z" fill="#ee3030" />
    <path d="M18 26L22 30 16 31Z" fill="#555" />
  </>
);

const SketchSmall = () => (
  <svg viewBox="0 0 32 32" className="h-[26px] w-[26px] shrink-0" aria-hidden="true">
    <SketchArt />
  </svg>
);

function GearArt({ fill, hole }: { fill: string; hole: string }) {
  return (
    <>
      {[0, 45, 90, 135].map((a) => (
        <rect key={a} x="13" y="1" width="6" height="30" rx="1" fill={fill} transform={`rotate(${a} 16 16)`} />
      ))}
      <circle cx="16" cy="16" r="10.500" fill={fill} />
      <circle cx="16" cy="16" r="5" fill={hole} />
    </>
  );
}

const Gear = () => (
  <svg viewBox="0 0 32 32" className="h-[26px] w-[26px] shrink-0" aria-hidden="true">
    <GearArt fill="#999999" hole="#f2f2f2" />
  </svg>
);

function Arrow({ open }: { open: boolean }) {
  return (
    <svg viewBox="0 0 12 14" className="h-3.5 w-3 shrink-0" aria-hidden="true">
      {open ? (
        <path d="M11 2V12H1Z" fill="url(#gFade)" stroke="#000" strokeWidth="1.500" />
      ) : (
        <path d="M1 0.800H4L10 7L4 13.200H1Z" fill="#fff" stroke="#222" strokeWidth="1.200" />
      )}
    </svg>
  );
}

type Row = { text: string; level: 1 | 2; open?: boolean; eye?: boolean; icon: React.FC };

const rows: Row[] = [
  { text: "Dokumenteinstellungen", level: 1, open: false, icon: Gear },
  { text: "Benannte Ansichten", level: 1, open: false, icon: Folder },
  { text: "Ursprung", level: 1, open: false, eye: false, icon: Folder },
  { text: "Körper", level: 1, open: true, eye: true, icon: Folder },
  { text: "Körper1", level: 2, eye: true, icon: Body },
  { text: "Körper4", level: 2, eye: true, icon: Body },
  { text: "Körper3", level: 2, eye: true, icon: Body },
  { text: "Körper5", level: 2, eye: false, icon: Body },
  { text: "Körper6", level: 2, eye: false, icon: Body },
  { text: "Körper7", level: 2, eye: false, icon: Body },
  { text: "Skizzen", level: 1, open: true, eye: true, icon: Folder },
  { text: "Skizze1", level: 2, eye: false, icon: SketchSmall },
  { text: "Skizze2", level: 2, eye: false, icon: SketchSmall },
];

function Browser() {
  return (
    <aside className="relative mt-[6px] w-[486px] pl-[7px] text-[18px] leading-none text-[#3c3c3c]">
      <div className="flex h-[39px] items-center border-2 border-[#cccccc] bg-[#f2f2f2] pl-[5px]">
        <svg viewBox="0 0 16 9" className="h-[9px] w-4" fill="#222">
          <path d="M0 4.500L8 0V9ZM8 4.500L16 0V9Z" />
        </svg>
        <h2 className="ml-4 flex-1 text-[#5c5c5c]">BROWSER</h2>
        <button aria-label="Minimieren" className="flex h-[23px] w-[23px] items-center justify-center border border-[#8c8c8c] bg-[#d8d8d8]">
          <span className="flex h-[13px] w-[13px] items-center justify-center rounded-sm bg-[#222222]">
            <span className="h-px w-2 bg-white" />
          </span>
        </button>
        <div className="mr-px ml-[7px] h-4 w-[5px] border-x-2 border-[#999999]" />
      </div>
      <ul className="mt-[9px] flex h-[531px] flex-col justify-between">
        <li className="flex h-8 items-center">
          <button aria-label="gewechshausscharnier einklappen" className="ml-[29px]">
            <Arrow open />
          </button>
          <div className="mr-[6px] ml-4 flex h-8 flex-1 items-center bg-[#f2f2f2] pr-3 pl-[3px]">
            <span className="mr-[5px] h-[26px] w-[5px] bg-[#ffd579]" />
            <Eye on />
            <div className="ml-[9px] flex h-[26px] flex-1 items-center bg-[#999999] pl-[7px] font-bold text-white">
              <svg viewBox="0 0 22 22" className="mr-[25px] h-[22px] w-[22px] shrink-0">
                <path d="M1 6L5 1H21V16L16 21H1Z" fill="#e2e5ec" stroke="#4d5058" strokeWidth="1.500" />
                <path d="M16 6L21 1V16L16 21Z" fill="#a2a8b6" />
              </svg>
              gewechshausscharnier…
            </div>
            <span className="relative ml-[5px] flex h-[22px] w-[22px] items-center justify-center rounded-full bg-[#e28a1c] text-[16px] font-bold text-white">
              T
              <span className="absolute -right-0.5 -bottom-px h-2 w-2 rounded-full border border-[#444444] bg-white" />
            </span>
            <input
              type="radio"
              checked
              readOnly
              aria-label="Komponente aktivieren"
              className="ml-5 h-[21px] w-[21px] appearance-none rounded-full border border-[#55585e] bg-[radial-gradient(circle,#2f3138_0_4px,#d4d9e2_5px)]"
            />
          </div>
        </li>
        {rows.map((r) => (
          <li key={r.text} className={r.level === 1 ? "flex h-8 items-center pl-[58px]" : "flex h-8 items-center pl-[114px]"}>
            {r.level === 1 && (
              <button aria-label={`${r.text} umschalten`} className="mr-4">
                <Arrow open={!!r.open} />
              </button>
            )}
            <div className="flex h-8 items-center bg-[#f2f2f2] pr-[17px] pl-[5px]">
              {r.eye !== undefined && (
                <button aria-label={`${r.text} Sichtbarkeit`} className="mr-[14px]">
                  <Eye on={r.eye} />
                </button>
              )}
              <r.icon />
              <span className="ml-[22px]">{r.text}</span>
            </div>
          </li>
        ))}
      </ul>
    </aside>
  );
}

/* ---------- bottom strip of the canvas ---------- */

const navIcons: { name: string; caret?: string; art: React.ReactNode }[] = [
  {
    name: "Orbit",
    caret: "gap-[9px] -mr-1.5",
    art: (
      <>
        <ellipse cx="15" cy="15" rx="7" ry="14" fill="#fff" stroke="#333" strokeWidth="1.500" />
        <ellipse cx="15" cy="15" rx="14" ry="6" fill="none" stroke="#333" strokeWidth="1.500" />
        <path d="M12 14.500h6M15 11.500v6" stroke="#1e8fe0" strokeWidth="1.500" />
      </>
    ),
  },
  {
    name: "Ansicht",
    art: (
      <>
        <path d="M3 10L10 3V7L21 4V10" fill="#bcc2cc" stroke="#333" strokeWidth="1.300" />
        <rect x="2" y="10" width="26" height="18" fill="#fff" stroke="#333" strokeWidth="1.500" />
        <rect x="6" y="14" width="18" height="10" fill="#a9afba" stroke="#333" strokeWidth="1.300" />
      </>
    ),
  },
  {
    name: "Verschieben",
    art: (
      <path
        d="M9 26L1 16Q1 13 4 15L9 19 6 6Q7 3 9 6L12 15 12 3Q14 0 15.500 3L16.500 15 19 4Q21 2 22 5L21 16 26 9Q29 8 29 11L23 25 21 29H11Z"
        fill="#fff"
        stroke="#333"
        strokeWidth="1.400"
      />
    ),
  },
  {
    name: "Zoom",
    art: (
      <>
        <circle cx="11" cy="11" r="10" fill="#e8f2f0" stroke="#555" strokeWidth="1.500" />
        <path d="M19 19L28 28" stroke="#333" strokeWidth="4" />
        <path d="M24 4h6M27 1v6M24 10h6" stroke="#333" strokeWidth="1.300" />
      </>
    ),
  },
  {
    name: "Zoomfenster",
    caret: "gap-[9px] -mr-1.5",
    art: (
      <>
        <rect x="1" y="1" width="28" height="28" fill="none" stroke="#777" strokeDasharray="4 2" />
        <circle cx="11" cy="11" r="10" fill="#e8f2f0" stroke="#555" strokeWidth="1.500" />
        <path d="M19 19L28 28" stroke="#333" strokeWidth="4" />
      </>
    ),
  },
  {
    name: "Anzeige",
    caret: "gap-1 -mr-1.5",
    art: (
      <>
        <rect x="1" y="1" width="28" height="23" fill="#fff" stroke="#222" strokeWidth="1.600" />
        <rect x="4" y="4" width="22" height="17" fill="#95b8e2" stroke="#1f3a66" strokeWidth="1.500" />
        <path d="M12 24V28H7V29.500H24V28H18V24" fill="#ddd" stroke="#333" />
      </>
    ),
  },
  {
    name: "Raster",
    caret: "gap-1 -mr-1.5",
    art: (
      <>
        <rect x="1" y="1" width="28" height="28" fill="#fff" stroke="#333" strokeWidth="1.600" />
        <path d="M5 1V29M9 1V29M13 1V29M17 1V29M21 1V29M25 1V29M1 5H29M1 9H29M1 13H29M1 17H29M1 21H29M1 25H29" stroke="#7a808c" />
      </>
    ),
  },
  {
    name: "Ansichtsfenster",
    caret: "gap-1",
    art: (
      <>
        <rect x="1" y="3" width="28" height="24" fill="#95b8e2" stroke="#1f3a66" strokeWidth="2" />
        <path d="M15 3V27M1 15H29" stroke="#1f3a66" strokeWidth="2" />
        <path d="M4 6h8v6H4ZM18 6h8v6h-8ZM4 18h8v6H4ZM18 18h8v6h-8Z" fill="none" stroke="#6f90bd" />
      </>
    ),
  },
];

function CanvasFooter() {
  return (
    <div className="relative mb-2 flex items-end justify-between pr-[22px] pl-[7px]">
      <div className="flex h-[39px] w-[479px] items-center border-r-2 border-b-2 border-l border-[#cccccc] bg-[#f2f2f2] pr-px pl-[39px] text-[18px] leading-none text-[#5c5c5c]">
        <h2 className="flex-1">KOMMENTARE</h2>
        <button aria-label="Kommentare öffnen">
          <svg viewBox="0 0 14 14" className="h-3.5 w-3.5">
            <circle cx="7" cy="7" r="7" fill="#222" />
            <path d="M3 7h8M7 3v8" stroke="#eee" strokeWidth="1.500" />
          </svg>
        </button>
        <div className="ml-[11px] h-4 w-[5px] border-x-2 border-[#999999]" />
      </div>
      <div className="absolute left-1/2 flex h-[39px] -translate-x-1/2 items-center gap-[17px] bg-[#f2f2f2] px-[5px]">
        {navIcons.map((n) => (
          <button key={n.name} aria-label={n.name} className={`flex items-center ${n.caret ?? ""}`}>
            <svg viewBox="0 0 30 30" className="h-6 w-6">
              {n.art}
            </svg>
            {n.caret && <Caret />}
          </button>
        ))}
      </div>
      <button aria-label="Autodesk" className="mb-2">
        <svg viewBox="0 0 22 22" className="h-[22px] w-[22px]">
          <path d="M11 0A11 11 0 0 0 11 22H22V11A11 11 0 0 0 11 0Z" fill="#000" />
          <path d="M4 15L14 6H18V15H14V11L9 15Z" fill="#fff" />
        </svg>
      </button>
    </div>
  );
}

/* ---------- timeline ---------- */

const history = "SESEEEEEEEEEEEEECCEECCCCEEE".split("");

const Chamfer = () => (
  <>
    <path d="M1 14L8 1H20L31 9V26L26 31H1Z" fill="#dcdcdc" stroke={G} strokeWidth="1.500" />
    <path d="M26 14L31 9V26L26 31Z" fill="#c4c4c4" />
    <path d="M2 15L13 1H24L10 20Z" fill={B2} stroke="#fff" />
  </>
);

const players: [string, string][] = [
  ["Anfang", "M1 2H4V24H1ZM20 2V24L6 13Z"],
  ["Zurück", "M15 2V24L1 13ZM17 8H20V18H17Z"],
  ["Wiedergabe", "M2 0V26L20 13Z"],
  ["Vor", "M1 8H4V18H1ZM6 2V24L20 13Z"],
  ["Ende", "M1 2V24L15 13ZM17 2H20V24H17Z"],
];

function Timeline() {
  return (
    <div className="flex h-[79px] items-start justify-between border-t-2 border-[#d6d6d6] bg-[linear-gradient(180deg,#f2f2f2_0%,#ededed_45%,#d6d6d6_100%)]">
      <div className="flex">
        <div className="flex h-[74px] w-[231px] items-center gap-[19px] pl-4">
          {players.map(([l, d]) => (
            <button key={l} aria-label={l}>
              <svg viewBox="0 0 21 26" className="h-[26px] w-[21px]">
                <path d={d} fill="#4c4c4c" />
              </svg>
            </button>
          ))}
        </div>
        <div className="mt-2.5">
          <div className="h-[9px] w-[1030px] bg-[#ffd579]" />
          <div className="relative w-[1037px]">
            <div className="grid grid-cols-[repeat(27,minmax(0,1fr))]">
              {history.map((h, i) => (
                <button key={i} aria-label={`Schritt ${i + 1}`} className="flex flex-col pt-[3px]">
                  <svg viewBox={h === "E" ? "0 0 64 64" : "0 0 32 32"} className="ml-[3px] h-[26px] w-[26px]">
                    {h === "E" ? <Extrude /> : h === "S" ? <SketchArt /> : <Chamfer />}
                  </svg>
                  <span className="mt-[5px] ml-[15px] h-2 w-[3px] bg-[#bdbdbd]" />
                </button>
              ))}
            </div>
            <div className="mr-[22px] ml-[15px] h-[3px] bg-[#bdbdbd]" />
            <svg viewBox="0 0 18 51" className="absolute -top-1.5 -right-1.5 h-[51px] w-[18px]">
              <path d="M0 0H18V8L10.500 17V51H7.500V17L0 8Z" fill="#666666" />
            </svg>
          </div>
        </div>
      </div>
      <button aria-label="Einstellungen" className="mt-6 mr-[21px]">
        <Gear />
      </button>
    </div>
  );
}

/* ---------- dock ---------- */

const Tile = ({ fill }: { fill: string }) => <rect width="64" height="64" rx="15" fill={fill} />;

type DockItem = { name: string; art: React.ReactNode; dot?: boolean; badge?: string };

const petals = ["#f3a83c", "#f0d94a", "#b5d35c", "#7cc48c", "#6aa8e0", "#9a86d0", "#d078b8", "#ee6a58"];
const padColors = ["#7de85c", "#f7c544", "#ea8f34", "#d8352a", "#a9b0b5", "#ec4c68", "#9a4fd8", "#3f9cf5", "#6fd2b4"];

function MiniWindow({ dark }: { dark?: boolean }) {
  return (
    <>
      <rect x="-5" y="12" width="74" height="40" fill={dark ? "#9c9c9c" : "#fafafa"} />
      <rect x="-5" y="10" width="74" height="3" fill="#d9d9d9" />
      {dark ? (
        <>
          <path d="M14 14h28l3 26H12Z" fill="#2c2a28" />
          <path d="M17 18l9 0 3 9 9-9 3 9-12 13-8-5Z" fill="#e8702c" />
          <path d="M18 30l8-2 4 7-10 3Z" fill="#52c832" />
          <rect x="52" y="13" width="17" height="38" fill="#e8e8e8" />
        </>
      ) : (
        <>
          <path d="M0 18h18M0 22h14M0 26h18M0 30h15M0 34h18M28 16h30M28 20h26" stroke="#c6c6c6" />
          <rect x="2" y="42" width="14" height="8" fill="#666" opacity="0.5" />
        </>
      )}
    </>
  );
}

const SafariArt = () => (
  <>
    <circle cx="32" cy="32" r="28" fill="url(#gBlue)" />
    <circle cx="32" cy="32" r="25" fill="none" stroke="#dcefff" strokeWidth="3" strokeDasharray="1 2.270" />
    <path d="M50 14L36 36 28 28Z" fill="#e4483c" />
    <path d="M14 50L36 36 28 28Z" fill="#f4f4f4" />
  </>
);

const PrusaArt = () => (
  <>
    <path d="M34 7Q48 8 50 18L20 40Q14 38 15 26 17 8 34 7Z" fill="#2a2a2c" />
    <path d="M50 20Q54 34 46 46 34 60 20 56 16 52 17 45Z" fill="#d8602c" />
  </>
);

const dockApps: DockItem[] = [
  {
    name: "Finder",
    dot: true,
    art: (
      <>
        <Tile fill="#e6ebf4" />
        <path d="M15 0H35Q29 16 28 36H36Q37 52 41 64H15Q0 64 0 49V15Q0 0 15 0Z" fill="url(#gBlue)" />
        <path d="M18 18v6M47 18v6M13 43Q32 59 51 43" fill="none" stroke="#16202c" strokeWidth="2.500" strokeLinecap="round" />
        <path d="M35 0Q28 18 28 37H36Q37 52 41 64" fill="none" stroke="#8ab4dc" strokeWidth="1" />
      </>
    ),
  },
  {
    name: "Siri",
    art: (
      <>
        <Tile fill="url(#gSiriBg)" />
        <circle cx="32" cy="32" r="27" fill="#2a7a70" opacity="0.5" stroke="#5cc8a0" strokeWidth="1" />
        <path d="M8 28Q18 14 30 30 26 48 12 46Z" fill="#e0306c" opacity="0.8" />
        <path d="M36 32Q50 20 58 36 48 48 36 40Z" fill="#3c9ce8" opacity="0.8" />
        <circle cx="33" cy="32" r="15" fill="url(#gSiri)" />
      </>
    ),
  },
  {
    name: "Launchpad",
    art: (
      <>
        <Tile fill="#cbcac8" />
        {padColors.map((c, i) => (
          <rect key={c} x={10.5 + (i % 3) * 15.5} y={10.5 + Math.floor(i / 3) * 15.5} width="12" height="12" rx="2.500" fill={c} />
        ))}
      </>
    ),
  },
  {
    name: "Mission Control",
    art: (
      <>
        <Tile fill="#000" />
        <path d="M5 10h29v18H5ZM37 18h24v28H37ZM8 35h26v19H8Z" fill="#d8d8d8" />
        <rect x="15" y="24" width="8" height="8" rx="2" fill="#6ad84a" />
        <rect x="44" y="42" width="8" height="8" rx="2" fill="#9050d0" />
        <rect x="16" y="49" width="8" height="8" rx="2" fill="#3f8ee8" />
      </>
    ),
  },
  {
    name: "App Store",
    art: (
      <>
        <Tile fill="url(#gBlue)" />
        <g stroke="#fff" strokeWidth="5.500" strokeLinecap="round">
          <path d="M28 14.500L48 48.500M36 14.500L22 38M17 46L16 48.500M12 39H38M46 39H52" />
        </g>
      </>
    ),
  },
  {
    name: "Mail",
    dot: true,
    badge: "17",
    art: (
      <>
        <Tile fill="url(#gMail)" />
        <rect x="10" y="18" width="44" height="28" rx="2" fill="#f0f0f0" />
        <path d="M11 45L24 32M53 45L40 32M11 19L28 36Q32 39 36 36L53 19" fill="none" stroke="#9a9a9a" strokeWidth="1.500" />
      </>
    ),
  },
  { name: "Safari", dot: true, art: (<><Tile fill="url(#gWhite)" /><SafariArt /></>) },
  {
    name: "Chrome",
    art: (
      <>
        <Tile fill="#f6f4f2" />
        <circle cx="32" cy="32" r="26" fill="#4aa050" />
        <path d="M9.500 19A26 26 0 0 1 54.500 19H32L20 39Z" fill="#d8453a" />
        <path d="M54.500 19A26 26 0 0 1 31 58L43 38 32 19Z" fill="#f4bf42" />
        <circle cx="32" cy="32" r="12.500" fill="#fff" />
        <circle cx="32" cy="32" r="10" fill="#4a84ec" />
      </>
    ),
  },
  {
    name: "Office",
    art: (
      <>
        <rect x="2" y="2" width="60" height="60" rx="3" fill="#fbfaf9" />
        {["#e0523c", "#e0523c", "#e0523c", "#3a9e64", "#4a90e8", "#f2b33c", "#3a9e64", "#f2b33c", "#f2b33c"].map((c, i) => (
          <rect key={i} x={17 + (i % 3) * 10.5} y={17 + Math.floor(i / 3) * 10.5} width="8.500" height="8.500" fill={c} />
        ))}
      </>
    ),
  },
  {
    name: "FaceTime",
    art: (
      <>
        <Tile fill="url(#gGreen)" />
        <rect x="10" y="18" width="31" height="28" rx="7" fill="#f4f6f2" />
        <path d="M43 29L54 21V44L43 36Z" fill="#e6f0e2" />
      </>
    ),
  },
  {
    name: "Kontakte",
    art: (
      <>
        <rect x="8" y="6" width="58" height="52" rx="9" fill="#8cc8d8" />
        <rect x="8" y="36" width="58" height="22" rx="9" fill="#e89048" />
        <Tile fill="url(#gBrown)" />
        <circle cx="33" cy="32" r="19" fill="none" stroke="#7d5a30" strokeWidth="2" />
        <circle cx="33" cy="27" r="7.500" fill="#8a6538" />
        <path d="M19 44Q33 30 47 44 40 51 33 51T19 44Z" fill="#8a6538" />
      </>
    ),
  },
  {
    name: "Kalender",
    art: (
      <>
        <Tile fill="#fafafa" />
        <path d="M15 0H49Q64 0 64 15V20H0V15Q0 0 15 0Z" fill="#e25a50" />
        <text x="32" y="16" textAnchor="middle" fontSize="14" fontWeight="500" fill="#fff">MAI</text>
        <text x="32" y="54" textAnchor="middle" fontSize="37" fontWeight="300" fill="#2a2a2a">28</text>
      </>
    ),
  },
  {
    name: "Erinnerungen",
    art: (
      <>
        <Tile fill="#faf9f8" />
        {["#3f7ff0", "#e5534a", "#ef9a3c"].map((c, i) => (
          <g key={c}>
            <circle cx="13" cy={16 + i * 16} r="4" fill={c} stroke="#fff" strokeWidth="1.500" />
            <circle cx="13" cy={16 + i * 16} r="5.500" fill="none" stroke={c} />
            <path d={`M24 ${16 + i * 16}H58`} stroke="#c4c4c4" strokeWidth="1.500" />
          </g>
        ))}
      </>
    ),
  },
  {
    name: "Lightroom",
    art: (
      <>
        <rect x="-5" y="-7" width="74" height="74" fill="#b7d2ea" />
        <rect x="-2" y="-4" width="68" height="68" fill="#15262c" />
        <text x="32" y="44" textAnchor="middle" fontSize="42" fontWeight="500" fontFamily="Open Sans, sans-serif" fill="#b7d2ea">Lr</text>
      </>
    ),
  },
  {
    name: "Final Cut Pro",
    art: (
      <>
        <path d="M2 6L56-5 61 8 4 20Z" fill="#dfe0ea" />
        <path d="M10 4L22 2 16 17 6 19ZM32 0L43-3 39 12 28 14ZM53-4L57-5 61 8 52 10Z" fill="#2c2d36" />
        <rect x="0" y="12" width="64" height="52" rx="14" fill="#2f313c" />
        <path d="M0 12H64V23H0Z" fill="#dfe0ea" />
        <path d="M8 12h9l-5 11H3ZM26 12h9l-5 11h-9ZM44 12h9l-5 11h-9Z" fill="#2c2d36" />
        <path d="M4 28H60V50Q60 60 50 60H14Q4 60 4 50Z" fill="url(#gRainbow)" />
      </>
    ),
  },
  {
    name: "Compressor",
    art: (
      <>
        <Tile fill="#2c2a2e" />
        <rect x="22" y="4" width="24" height="12" fill="#3c5c2c" />
        <rect x="8" y="14" width="48" height="37" rx="10" fill="url(#gMetal)" />
        <path d="M18 5L32 28 46 5M26 32L20 44M38 32L44 44" fill="none" stroke="#8a92a6" strokeWidth="4" strokeLinecap="round" />
        <ellipse cx="32" cy="24" rx="8" ry="12" fill="#7c8498" />
        <rect x="17" y="52" width="30" height="8" fill="#e8682c" stroke="#111" strokeWidth="2" />
      </>
    ),
  },
  {
    name: "Motion",
    art: (
      <>
        <Tile fill="#29282c" />
        <path d="M12 54Q12 34 44 10L54 14 46 40 34 36Z" fill="url(#gRainbow)" />
        <path d="M12 54Q18 34 34 26L30 44Z" fill="#3f6be0" opacity="0.8" />
        <ellipse cx="32" cy="32" rx="28" ry="11" transform="rotate(-55 32 32)" fill="none" stroke="#7c8090" strokeWidth="3" />
        <ellipse cx="32" cy="32" rx="28" ry="11" transform="rotate(50 32 32)" fill="none" stroke="#5c6070" strokeWidth="3" />
      </>
    ),
  },
  {
    name: "Notizen",
    art: (
      <>
        <Tile fill="#f6f5f2" />
        <path d="M15 0H49Q64 0 64 15V17H0V15Q0 0 15 0Z" fill="url(#gYellow)" />
        <path d="M0 19H64" stroke="#a0a0a0" strokeWidth="1.500" strokeDasharray="1.500 1.500" />
        <path d="M0 32H64M0 48H64" stroke="#d4d3cf" strokeWidth="1.500" />
      </>
    ),
  },
  {
    name: "Karten",
    art: (
      <>
        <Tile fill="#f2f2f0" />
        <path d="M34 0H49Q64 0 64 15V36Q44 20 38 0Z" fill="#72cc62" />
        <path d="M0 15Q2 2 15 0V36H0Z" fill="#84d272" />
        <path d="M38 26Q52 40 64 48V36Q46 22 38 8Z" fill="#fff" />
        <path d="M42 0Q48 22 64 28V18Q52 14 50 0Z" fill="#d8d8d8" />
        <path d="M36 64L46 38 64 58Q60 64 52 64Z" fill="#f4c63c" />
        <path d="M0 30Q10 44 10 62 0 60 0 48Z" fill="#e884b8" />
        <rect x="18" width="15" height="34" fill="#2f80f2" />
        <circle cx="25" cy="40" r="15" fill="#fff" />
        <circle cx="25" cy="40" r="13" fill="#3a86f0" />
        <path d="M25 29L32 48 25 44 18 48Z" fill="#fff" />
      </>
    ),
  },
  {
    name: "Fotos",
    art: (
      <>
        <Tile fill="#fbfbfa" />
        {petals.map((c, i) => (
          <rect key={c} x="23.500" y="4" width="17" height="27" rx="8.500" fill={c} opacity="0.85" transform={`rotate(${i * 45} 32 32)`} />
        ))}
      </>
    ),
  },
  { name: "Musik", art: (<><Tile fill="url(#gRed)" /><FaMusic x={11} y={11} size={40} color="#fff" /></>) },
  { name: "Podcasts", art: (<><Tile fill="url(#gPurple)" /><FaPodcast x={8} y={8} size={48} color="#fff" /></>) },
  {
    name: "TV",
    art: (
      <>
        <Tile fill="url(#gBlack)" />
        <FaApple x={7} y={18} size={25} color="#fff" />
        <text x="43" y="42" textAnchor="middle" fontSize="26" fontWeight="500" fill="#fff">tv</text>
      </>
    ),
  },
  {
    name: "Bücher",
    art: (
      <>
        <Tile fill="url(#gOrange)" />
        <path d="M11 20Q13 15 21 15T31 20V48Q28 45 21 45T11 49ZM33 20Q35 15 43 15T53 20V49Q50 45 43 45T33 48Z" fill="#faf6f2" />
      </>
    ),
  },
  {
    name: "iMovie",
    art: (
      <>
        <Tile fill="#fff" />
        <path d="M32 6L40 24 59 26 45 38 50 57 32 47 15 57 20 38 5 26 24 24Z" fill="url(#gStar)" stroke="#a0a0aa" strokeWidth="3" strokeLinejoin="round" />
        <path d="M25 27H36V36H25ZM36 31L40 28V35L36 33Z" fill="#c8c8d0" />
      </>
    ),
  },
  {
    name: "GarageBand",
    art: (
      <>
        <Tile fill="url(#gDark)" />
        <circle cx="17" cy="16" r="10" fill="#2a2a2d" />
        <path d="M38 34L53-7" stroke="#c09068" strokeWidth="3.500" />
        <path d="M42 24Q42 34 48 38 42 48 38 60 30 70 18 66 10 58 15 48 20 42 24 36 28 30 34 26 34 34 38 34Z" fill="url(#gGuitar)" stroke="#3a120a" strokeWidth="2" />
        <path d="M24 56L38 36" stroke="#2a1008" strokeWidth="2.500" />
        <ellipse cx="25" cy="52" rx="5" ry="8" transform="rotate(35 26 52)" fill="#f8b84c" />
      </>
    ),
  },
  {
    name: "Photo Booth",
    art: (
      <>
        <Tile fill="url(#gBooth)" />
        <path d="M8 22L20 18V52L15 53Z" fill="#e8e8e8" />
        <rect x="20" y="14" width="34" height="36" fill="#fff" />
        <circle cx="37" cy="28" r="7" fill="#d4352a" />
        <path d="M25 48Q26 36 37 36T49 48Z" fill="#d4352a" />
        <circle cx="49" cy="50" r="17" fill="#3c3c3e" />
        <circle cx="49" cy="50" r="8" fill="#1c1c28" />
        <circle cx="49" cy="50" r="3" fill="#7a4a9a" />
      </>
    ),
  },
  {
    name: "Systemeinstellungen",
    art: (
      <>
        <Tile fill="url(#gGrey)" />
        <circle cx="32" cy="32" r="27" fill="#3a3a3c" />
        <circle cx="32" cy="32" r="23.500" fill="none" stroke="#b4b6b8" strokeWidth="3.500" strokeDasharray="2 1.500" />
        <circle cx="32" cy="32" r="16.500" fill="#4a4a4c" stroke="#a9abad" strokeWidth="3.500" />
        <path d="M32 32H48M32 32L24 18M32 32L24 46" stroke="#a9abad" strokeWidth="3.500" />
      </>
    ),
  },
  {
    name: "Skype",
    art: (
      <>
        <circle cx="20" cy="20" r="19" fill="#3fa2e4" />
        <circle cx="44" cy="44" r="19" fill="#3a80d4" />
        <circle cx="32" cy="32" r="28" fill="url(#gSkype)" />
        <text x="32" y="47" textAnchor="middle" fontSize="43" fontWeight="700" fill="#fff">S</text>
      </>
    ),
  },
  {
    name: "Fusion 360",
    dot: true,
    art: (
      <>
        <Tile fill="#fff" />
        <path d="M8 8L14 6V50L8 47Z" fill="#d95f1c" />
        <path d="M14 6H52V14H56V58H12V42H14Z" fill="#8a3c14" />
        <rect x="12" y="6" width="40" height="37" fill="#ee7430" />
        <text x="34" y="35" textAnchor="middle" fontSize="30" fontWeight="700" fill="#fff">F</text>
        <text x="33" y="54" textAnchor="middle" fontSize="11" fontWeight="700" fill="#fff">360</text>
      </>
    ),
  },
  {
    name: "Terminal",
    art: (
      <>
        <Tile fill="#b8bcc0" />
        <rect x="2" y="2" width="60" height="60" rx="13" fill="#000" />
        <rect x="6" y="6" width="52" height="52" rx="9" fill="#262628" />
        <path d="M11 12L17 16 11 20M20 24H29" fill="none" stroke="#f0f0f0" strokeWidth="2.500" />
      </>
    ),
  },
  { name: "WhatsApp", art: (<><Tile fill="url(#gGreen)" /><FaWhatsapp x={5} y={5} size={54} color="#fff" /></>) },
  {
    name: "Quick",
    art: (
      <>
        <rect x="-8" y="-8" width="80" height="80" rx="20" fill="#221f20" />
        <circle cx="32" cy="30" r="19" fill="none" stroke="#4aa4e0" strokeWidth="13" />
        <path d="M18 46Q32 34 52 46L58 52 50 61Q30 58 18 46Z" fill="#fff" />
      </>
    ),
  },
  {
    name: "AnyDesk",
    art: (
      <>
        <rect width="64" height="64" rx="5" fill="#e65040" />
        <path d="M26 18L40 32 26 46 12 32ZM34 18H39L52 32 39 46H34L46 32Z" fill="#fff" />
      </>
    ),
  },
  { name: "PrusaSlicer", dot: true, art: (<><Tile fill="#fff" /><PrusaArt /></>) },
];

const dockRecent: DockItem[] = [
  {
    name: "Fenster",
    art: (
      <>
        <rect x="-8" y="5" width="80" height="54" fill="#2f6cb4" />
        <rect x="-8" y="7" width="80" height="25" fill="#fff" />
      </>
    ),
  },
  {
    name: "exec",
    art: (
      <>
        <rect x="-2" y="1" width="68" height="60" rx="2" fill="#111" stroke="#8c8c8c" />
        <rect x="1" y="7" width="62" height="50" fill="#272727" />
        <text x="6" y="18" fontSize="10" fontFamily="Liberation Mono, monospace" fill="#6ae05c">exec</text>
      </>
    ),
  },
  {
    name: "Vorschau",
    art: (
      <>
        <Tile fill="#f0f0f0" />
        <rect x="4" y="4" width="56" height="56" rx="11" fill="#8fb2ec" />
        <path d="M4 34H60V48H4Z" fill="#2c4a84" />
        <path d="M4 46Q24 40 40 60H15Q4 60 4 49Z" fill="#d8cfc4" />
        <rect x="33" y="31" width="26" height="14" rx="4" fill="#181818" />
        <path d="M36 45H56L61 62Q60 68 46 68T31 62Z" fill="#c4c8ce" stroke="#777" />
      </>
    ),
  },
];

const dockFiles: DockItem[] = [
  {
    name: "Dokumente",
    art: (
      <>
        <path d="M12-6H36L48 60H12Z" fill="#e8e8e8" />
        <path d="M-2 6H40L64 28V60H-2Z" fill="#f3f3f3" stroke="#d4d4d4" />
        <path d="M40 0L64 28H48Z" fill="#dadada" />
        <path d="M20 52Q32 40 30 24 36 40 42 42 30 40 20 52" fill="none" stroke="#bcbcbc" strokeWidth="2.500" />
      </>
    ),
  },
  {
    name: "Ordner",
    art: (
      <>
        <path d="M6 0H24L30 5H60V20H2Z" fill="#3f94d4" />
        <path d="M1 9H22L28 14H63V30H1Z" fill="#5caee6" />
        <path d="M-1 18H65V58Q65 64 59 64H5Q-1 64-1 58Z" fill="url(#gFolder)" />
      </>
    ),
  },
  {
    name: "Cloud",
    art: (
      <>
        <path d="M-8-3H26L32 3H72V6H30L26 13H-8Z" fill="#98a4ac" />
        <path d="M-8 17H30L36 8H72V67H-8Z" fill="#fafafa" />
        <path d="M6 43V23H38V30" fill="none" stroke="#58b4f0" strokeWidth="5" />
        <path d="M38 33H16V56H28M34 56H52V33H44" fill="none" stroke="#3a7cb4" strokeWidth="5" />
        <path d="M26 48Q22 42 28 41 32 35 37 41 43 43 39 48Z" fill="none" stroke="#3a7cb4" strokeWidth="2" />
      </>
    ),
  },
  {
    name: "Mail Fenster",
    art: (
      <>
        <rect x="-5" y="7" width="74" height="50" fill="#f8f8f8" />
        <rect x="10" y="20" width="58" height="2" fill="#3878dc" />
        <path d="M14 10H60M14 13H60M14 16H60M-2 24h16M-2 28h16M-2 32h16" stroke="#c4c4c4" />
        <rect x="44" y="44" width="24" height="24" rx="5" fill="url(#gMail)" />
        <rect x="47" y="51" width="18" height="11" fill="#f0f0f0" />
        <path d="M47 51l9 7 9-7" fill="none" stroke="#999" />
      </>
    ),
  },
  {
    name: "Slicer Fenster",
    art: (
      <>
        <MiniWindow dark />
        <g transform="translate(42 44) scale(0.38)">
          <Tile fill="#fff" />
          <PrusaArt />
        </g>
      </>
    ),
  },
  {
    name: "Safari Fenster",
    art: (
      <>
        <MiniWindow />
        <g transform="translate(44 45) scale(0.36)">
          <Tile fill="#dcdcdc" />
          <SafariArt />
        </g>
      </>
    ),
  },
  {
    name: "Papierkorb",
    art: (
      <>
        <path d="M4 4L10 60Q12 67 32 67T54 60L60 4Z" fill="url(#gWhite)" />
        <ellipse cx="32" cy="4" rx="28" ry="7" fill="#b8bab6" stroke="#e8e8e8" strokeWidth="2" />
      </>
    ),
  },
];

function DockCell({ item }: { item: DockItem }) {
  return (
    <button aria-label={item.name} className="relative flex min-w-0 flex-1 flex-col items-center pt-[13px]">
      <svg viewBox="0 0 64 64" className="h-16 w-16 overflow-visible font-[Inter,sans-serif]">
        {item.art}
      </svg>
      {item.badge && (
        <span className="absolute top-[5px] right-0.5 flex h-[30px] w-[30px] items-center justify-center rounded-full bg-[#e05140] text-[17px] leading-none text-white">
          {item.badge}
        </span>
      )}
      {item.dot && <span className="mt-[14px] h-[7px] w-[7px] rounded-full bg-black/90" />}
    </button>
  );
}

function Dock() {
  return (
    <footer className="mt-[3px] mr-[72px] mb-2 ml-[73px] flex h-[104px] rounded-[30px] border-2 border-white/20 bg-[linear-gradient(90deg,#625c56_0%,#635c57_7%,#688a54_12.5%,#66745a_17%,#67795a_25%,#6da356_31.5%,#80f058_37%,#86ea5e_41%,#7cc85a_44%,#6a8a55_47%,#68825a_50%,#6b9056_53%,#7cd05a_57%,#84f05a_60%,#8cec60_61.5%,#7fd95c_63%,#72b556_65.5%,#698a58_69%,#676d57_76%,#66665a_85%,#645d56_93%,#625f58_100%)] bg-origin-border px-0.5 font-[Inter,sans-serif]">
      {dockApps.map((d) => (
        <DockCell key={d.name} item={d} />
      ))}
      <div className="flex w-10 justify-center">
        <span className="mt-[13px] h-[75px] w-px bg-black/60" />
      </div>
      {dockRecent.map((d) => (
        <DockCell key={d.name} item={d} />
      ))}
      <div className="flex w-[37px] justify-center">
        <span className="mt-[13px] h-[75px] w-px bg-black/60" />
      </div>
      {dockFiles.map((d) => (
        <DockCell key={d.name} item={d} />
      ))}
    </footer>
  );
}

export default function App() {
  return (
    <div className="flex min-h-screen flex-col overflow-hidden bg-[linear-gradient(90deg,#1c3c0c_0%,#58d82c_0.15%,#1c3c0c_0.4%,#0f0b00_0.7%,#100c00_11%,#3fa01e_12.8%,#d8f5d0_13.4%,#2c7a14_14%,#120e00_15.5%,#3c9a1e_18%,#140f00_19.5%,#1c4a0c_26%,#2f8a18_30%,#58c832_36%,#1c3008_38%,#6ae03c_41%,#3f9a22_46%,#162408_50%,#3f9a22_54%,#64d83a_59%,#1c3008_61%,#58c832_64%,#2a6a14_68%,#1c3c0c_78%,#120e00_82%,#2c6a18_85%,#100c00_92%,#1a2c0a_98%,#100c00_100%)] font-['Open_Sans',sans-serif]">
      <SharedDefs />
      <MenuBar />
      <main className="mt-0.5 flex flex-1 flex-col overflow-hidden rounded-[16px]">
        <TitleBar />
        <TabBar />
        <Toolbar />
        <section className="relative flex flex-1 flex-col justify-between overflow-hidden">
          <Scene />
          <ViewCube />
          <Browser />
          <CanvasFooter />
        </section>
        <Timeline />
      </main>
      <Dock />
    </div>
  );
}
